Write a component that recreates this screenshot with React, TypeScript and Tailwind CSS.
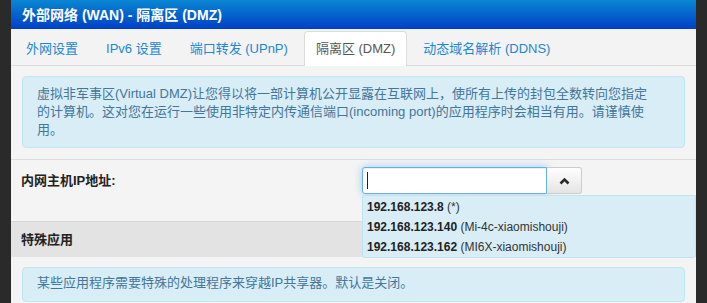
import React from "react";

const font = { fontFamily: '"Liberation Sans", "Noto Sans CJK SC", Arial, sans-serif' };

const tabs = [
  { label: "外网设置", active: false },
  { label: "IPv6 设置", active: false },
  { label: "端口转发 (UPnP)", active: false },
  { label: "隔离区 (DMZ)", active: true },
  { label: "动态域名解析 (DDNS)", active: false },
];

const hosts = [
  { ip: "192.168.123.8", name: "(*)" },
  { ip: "192.168.123.140", name: "(Mi-4c-xiaomishouji)" },
  { ip: "192.168.123.162", name: "(MI6X-xiaomishouji)" },
];

export default function App() {
  return (
    <div
      className="w-[707px] h-[303px] overflow-hidden bg-[#2a2a2a] flex pl-[11px] pr-[11px]"
      style={font}
    >
      <div className="flex-1 flex flex-col bg-[#f4f4f4] min-w-0">
        {/* header */}
        <div className="h-[29px] shrink-0 flex items-center pl-[11px] bg-[linear-gradient(to_bottom,#0a86d2,#0040c8)]">
          <span className="text-white font-bold text-[14px] leading-[16px]">
            外部网络 (WAN) - 隔离区 (DMZ)
          </span>
        </div>
        {/* tabs */}
        <div className="h-[37px] shrink-0 flex items-end pl-[3px] bg-[#f3f3f3] border-b border-[#dcdcdc]">
          {tabs.map((t) => (
            <div
              key={t.label}
              className={
                t.active
                  ? "h-[35px] -mb-px mr-[4px] px-[11px] flex items-center border border-[#dcdcdc] border-b-0 rounded-t-[4px] bg-white text-[#555] text-[13px] whitespace-nowrap"
                  : "h-[35px] -mb-px mr-[4px] px-[11px] flex items-center border border-transparent text-[#2287d3] text-[13px] whitespace-nowrap"
              }
            >
              {t.label}
            </div>
          ))}
        </div>
        {/* info alert */}
        <div className="mx-[11px] mt-[10px] rounded-[4px] border border-[#bce8f1] bg-[#d9edf7] pl-[14px] pr-[20px] pt-[8px] pb-[8px] text-[13px] leading-[18px] text-[#42769a] whitespace-nowrap">
          虚拟非军事区(Virtual DMZ)让您得以将一部计算机公开显露在互联网上，使所有上传的封包全数转向您指定
          <br />
          的计算机。这对您在运行一些使用非特定内传通信端口(incoming port)的应用程序时会相当有用。请谨慎使
          <br />
          用。
        </div>
        {/* row */}
        <div className="mt-[11px] border-t border-[#dddddd] h-[62px] shrink-0 flex pl-[10px] pt-[7px]">
          <div className="w-[341px] h-[27px] flex items-center font-bold text-[13px] text-[#222]">
            内网主机IP地址:
          </div>
          <div className="relative flex h-[27px] z-10">
            <div className="w-[185px] h-[27px] bg-white border border-[#66afe9] rounded-l-[3px] shadow-[inset_0_1px_1px_rgba(0,0,0,0.075),0_0_8px_rgba(102,175,233,0.6)] flex items-center pl-[4px]">
              <span className="w-px h-[17px] bg-[#222]" />
            </div>
            <div className="w-[35px] h-[27px] border border-l-0 border-[#cccccc] rounded-r-[3px] bg-[linear-gradient(to_bottom,#ffffff,#e4e4e4)] flex items-center justify-center">
              <svg width="11" height="8" viewBox="0 0 11 8">
                <polyline
                  points="1.5,6.5 5.5,2.5 9.5,6.5"
                  fill="none"
                  stroke="#2a2a2a"
                  strokeWidth="2.6"
                />
              </svg>
            </div>
            <div className="absolute left-0 top-[28px] w-[334px] bg-[#d9edf7] border border-[#bfe4f0] rounded-b-[3px] pt-[1px] pl-[4px] text-[12px] leading-[20px] text-[#222] whitespace-nowrap">
              {hosts.map((h) => (
                <div key={h.ip} className="h-[20px]">
                  <span className="font-bold">{h.ip}</span>{" "}
                  <span className="text-[#333]">{h.name}</span>
                </div>
              ))}
            </div>
          </div>
        </div>
        {/* section header */}
        <div className="h-[36px] shrink-0 bg-[#e3e3e3] border-t border-[#d8d8d8] flex items-center pl-[10px] font-bold text-[13px] text-[#222]">
          特殊应用
        </div>
        {/* second alert */}
        <div className="mx-[11px] mt-[10px] rounded-[4px] border border-[#bce8f1] bg-[#d9edf7] pl-[14px] pt-[6px] pb-[9px] text-[13px] leading-[18px] text-[#42769a] whitespace-nowrap">
          某些应用程序需要特殊的处理程序来穿越IP共享器。默认是关闭。
        </div>
      </div>
    </div>
  );
}
